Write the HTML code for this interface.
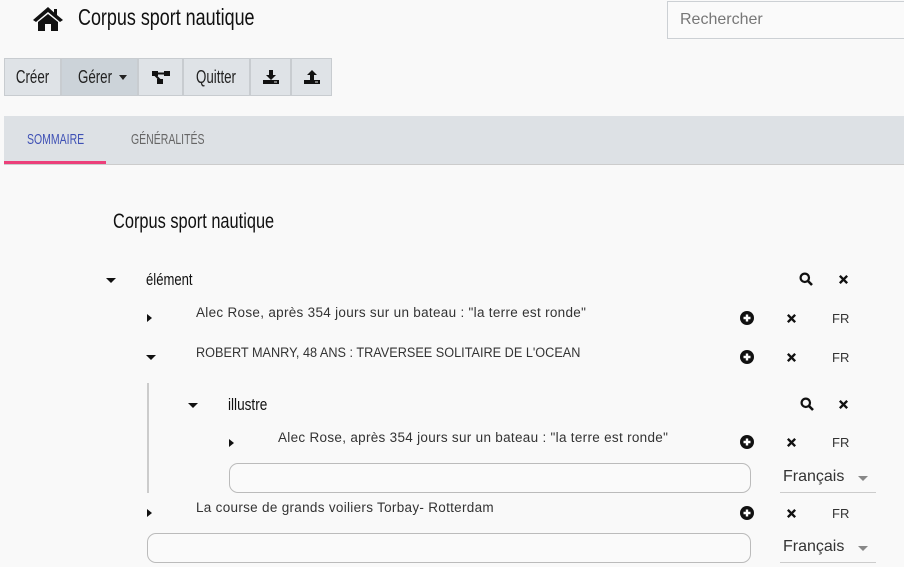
<!DOCTYPE html>
<html><head><meta charset="utf-8"><style>
*{box-sizing:border-box;margin:0;padding:0}
body{width:904px;height:567px;background:#f9f9f9;position:relative;overflow:hidden;font-family:"Liberation Sans",sans-serif;color:#222}
.a{position:absolute}
.c{display:inline-block;transform-origin:left center;white-space:nowrap}
.btn{position:absolute;top:58px;height:38px;background:#dfe3e7;border:1px solid #c8ccd0;display:flex;align-items:center;justify-content:center;font-size:18px;color:#222}
.btn .c{transform:scaleX(0.74);transform-origin:center}
.t{font-size:13.5px;color:#333;position:absolute;white-space:nowrap;transform-origin:left center}
.fr{position:absolute;font-size:13px;color:#333}
.inp{position:absolute;border:1px solid #bbb;border-radius:9px;height:30px;background:#fafafa}
.sel{position:absolute;width:96px;height:30px;border-bottom:1px solid #ccc;font-size:16px;color:#333;padding-left:3px;padding-top:5px}
.sel:after{content:"";position:absolute;right:8px;top:13px;border:5px solid transparent;border-top:5px solid #888}
.dn{position:absolute;width:0;height:0;border-left:5px solid transparent;border-right:5px solid transparent;border-top:5px solid #111}
.rt{position:absolute;width:0;height:0;border-top:4px solid transparent;border-bottom:4px solid transparent;border-left:5px solid #111}
</style></head><body>
<svg class="a" style="left:32px;top:6px" width="32" height="26" viewBox="0 0 32 26"><path d="M16 1 L1 14 L4 16 L16 6 L28 16 L31 14 L25 9 V3 H22 V6.5 Z M6 16 V25 H13 V18 H19 V25 H26 V16 L16 8 Z" fill="#111"/></svg>
<div class="a" style="left:78px;top:4px;font-size:23px;color:#111"><span class="c" style="transform:scaleX(0.78)">Corpus sport nautique</span></div>
<div class="a" style="left:667px;top:1px;width:240px;height:38px;border:1px solid #ccd0d4;background:#fafafa;font-size:16px;color:#777;padding:9px 12px">Rechercher</div>

<div class="btn" style="left:4px;width:57px"><span class="c">Créer</span></div>
<div class="btn" style="left:61px;width:77px;background:#ccd3d9"><span class="c">Gérer</span><span style="display:inline-block;border-left:4px solid transparent;border-right:4px solid transparent;border-top:5px solid #222;margin-left:0px"></span></div>
<div class="btn" style="left:138px;width:45px"><svg width="22" height="16" viewBox="0 0 22 16"><rect x="2" y="2" width="6" height="5" fill="#111"/><rect x="14" y="2" width="6" height="5" fill="#111"/><rect x="7" y="10" width="6" height="5" fill="#111"/><path d="M7 4.5H15 M5 6 L10 11" stroke="#111" stroke-width="2"/></svg></div>
<div class="btn" style="left:183px;width:67px"><span class="c">Quitter</span></div>
<div class="btn" style="left:250px;width:41px"><svg width="18" height="16" viewBox="0 0 18 16"><path d="M7 1H11V6H14L9 11L4 6H7Z" fill="#111"/><rect x="1" y="11" width="16" height="4" fill="#111"/><rect x="12" y="12.5" width="3" height="1" fill="#ddd"/></svg></div>
<div class="btn" style="left:291px;width:41px"><svg width="18" height="16" viewBox="0 0 18 16"><path d="M7 11H11V6H14L9 1L4 6H7Z" fill="#111"/><rect x="1" y="11" width="16" height="4" fill="#111"/><rect x="12" y="12.5" width="3" height="1" fill="#ddd"/></svg></div>

<div class="a" style="left:4px;top:116px;width:900px;height:49px;background:#dde1e5;border-bottom:1px solid #ccc"></div>
<div class="a" style="left:27px;top:131px;font-size:15px;color:#3f51b5"><span class="c" style="transform:scaleX(0.7)">SOMMAIRE</span></div>
<div class="a" style="left:131px;top:131px;font-size:15px;color:#666"><span class="c" style="transform:scaleX(0.7)">GÉNÉRALITÉS</span></div>
<div class="a" style="left:4px;top:161px;width:102px;height:3px;background:#ec407a"></div>

<div class="a" style="left:113px;top:210px;font-size:21px;color:#111"><span class="c" style="transform:scaleX(0.78)">Corpus sport nautique</span></div>

<div class="dn" style="left:106px;top:278px"></div>
<div class="a" style="left:146px;top:270px;font-size:17px;color:#111"><span class="c" style="transform:scaleX(0.77)">élément</span></div>
<div class="rt" style="left:147px;top:314px"></div>
<div class="t" style="left:196px;top:305px;letter-spacing:0.3px">Alec Rose, après 354 jours sur un bateau : "la terre est ronde"</div>
<div class="dn" style="left:146px;top:355px"></div>
<div class="t" style="left:196px;top:345px;transform:scaleX(0.94)">ROBERT MANRY, 48 ANS : TRAVERSEE SOLITAIRE DE L'OCEAN</div>
<div class="a" style="left:147px;top:383px;width:2px;height:110px;background:#ccc"></div>
<div class="dn" style="left:188px;top:403px"></div>
<div class="a" style="left:228px;top:395px;font-size:17px;color:#111"><span class="c" style="transform:scaleX(0.8)">illustre</span></div>
<div class="rt" style="left:229px;top:439px"></div>
<div class="t" style="left:278px;top:430px;letter-spacing:0.3px">Alec Rose, après 354 jours sur un bateau : "la terre est ronde"</div>
<div class="inp" style="left:229px;top:463px;width:522px"></div>
<div class="sel" style="left:780px;top:463px">Français</div>
<div class="rt" style="left:147px;top:509px"></div>
<div class="t" style="left:196px;top:500px;letter-spacing:0.3px">La course de grands voiliers Torbay- Rotterdam</div>
<div class="inp" style="left:147px;top:533px;width:604px"></div>
<div class="sel" style="left:780px;top:533px">Français</div>

<svg width="0" height="0" style="position:absolute"><defs>
<symbol id="pl" viewBox="0 0 14 14"><circle cx="7" cy="7" r="7" fill="#111"/><path d="M7 3.5V10.5M3.5 7H10.5" stroke="#fff" stroke-width="2.4"/></symbol>
<symbol id="x" viewBox="0 0 12 12"><path d="M2 2L10 10M10 2L2 10" stroke="#111" stroke-width="2.6"/></symbol>
<symbol id="s" viewBox="0 0 14 14"><circle cx="5.8" cy="5.8" r="4.2" fill="none" stroke="#111" stroke-width="2.2"/><path d="M9 9L13 13" stroke="#111" stroke-width="2.6"/></symbol>
</defs></svg>
<svg class="a" style="left:799px;top:272px" width="14" height="14"><use href="#s"/></svg>
<svg class="a" style="left:838px;top:274px" width="11" height="11"><use href="#x"/></svg>
<svg class="a" style="left:800px;top:397px" width="14" height="14"><use href="#s"/></svg>
<svg class="a" style="left:838px;top:399px" width="11" height="11"><use href="#x"/></svg>

<svg class="a" style="left:740px;top:311px" width="14" height="14"><use href="#pl"/></svg>
<svg class="a" style="left:786px;top:313px" width="11" height="11"><use href="#x"/></svg>
<div class="fr" style="left:832px;top:311px">FR</div>
<svg class="a" style="left:740px;top:350px" width="14" height="14"><use href="#pl"/></svg>
<svg class="a" style="left:786px;top:352px" width="11" height="11"><use href="#x"/></svg>
<div class="fr" style="left:832px;top:350px">FR</div>
<svg class="a" style="left:740px;top:435px" width="14" height="14"><use href="#pl"/></svg>
<svg class="a" style="left:786px;top:437px" width="11" height="11"><use href="#x"/></svg>
<div class="fr" style="left:832px;top:435px">FR</div>
<svg class="a" style="left:740px;top:506px" width="14" height="14"><use href="#pl"/></svg>
<svg class="a" style="left:786px;top:508px" width="11" height="11"><use href="#x"/></svg>
<div class="fr" style="left:832px;top:506px">FR</div>
</body></html>
